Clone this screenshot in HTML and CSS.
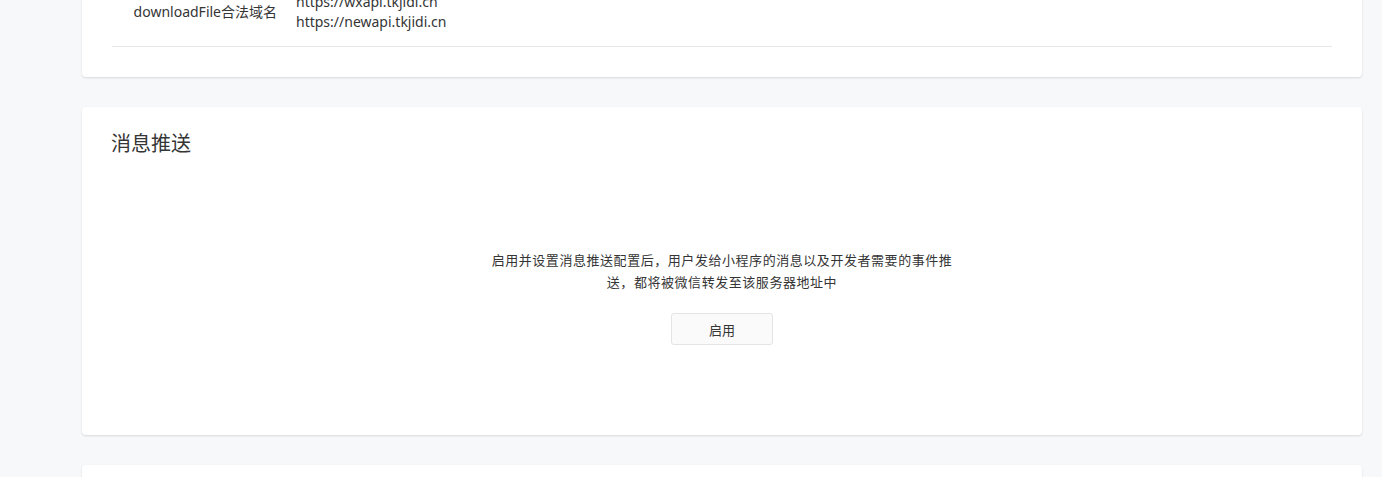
FILE: index.html
```html
<!DOCTYPE html>
<html lang="zh-CN">
<head>
    <meta charset="UTF-8">
    <meta name="viewport" content="width=device-width, initial-scale=1.0">
    <title>开发设置</title>
    <link rel="stylesheet" href="styles.css">
</head>
<body>
    <main class="page">

        <!-- 服务器域名 -->
        <section class="card domain-card">
            <div class="domain-row">
                <div class="domain-label">downloadFile合法域名</div>
                <div class="domain-values">
                    <p>https://wxapi.tkjidi.cn</p>
                    <p>https://newapi.tkjidi.cn</p>
                </div>
            </div>
        </section>

        <!-- 消息推送 -->
        <section class="card">
            <h3 class="card-title">消息推送</h3>
            <div class="empty-box">
                <p class="empty-desc">启用并设置消息推送配置后，用户发给小程序的消息以及开发者需要的事件推送，都将被微信转发至该服务器地址中</p>
                <button class="btn-default" type="button">启用</button>
            </div>
        </section>

        <section class="card card-next"></section>

    </main>
</body>
</html>
```

FILE: styles.css
```css
html, body {
    margin: 0;
    padding: 0;
}

body {
    font-family: "Noto Sans", "Noto Sans CJK SC", sans-serif;
    font-size: 14px;
    color: #353535;
    background-color: #f6f8f9;
    overflow: hidden;
}

p {
    margin: 0;
}

.page {
    margin-top: -8px;
    padding: 0 20px 0 82px;
    display: flex;
    flex-direction: column;
    gap: 30px;
}

.card {
    background-color: #fff;
    border-radius: 4px;
    box-shadow: 0 1px 2px rgba(150, 150, 150, 0.3);
    padding: 24px 30px;
}

/* 域名 */
.domain-card {
    padding: 0 30px 30px;
}

.domain-row {
    display: flex;
    align-items: center;
    padding-bottom: 14px;
    border-bottom: 1px solid #e7e7eb;
}

.domain-label {
    width: 165px;
    text-align: right;
    margin-right: 19px;
    line-height: 20px;
}

.domain-values p {
    line-height: 20px;
}

/* 消息推送 */
.card-title {
    margin: 0 0 0 -1px;
    font-size: 20px;
    font-weight: 400;
    line-height: 24px;
    transform: translateY(1px);
}

.empty-box {
    padding: 94px 0 66px;
    display: flex;
    flex-direction: column;
    align-items: center;
}

.empty-desc {
    max-width: 480px;
    font-family: "Noto Sans CJK SC", sans-serif;
    font-size: 13px;
    letter-spacing: 0.55px;
    text-spacing-trim: space-all;
    line-height: 22px;
    text-align: center;
}

.btn-default {
    margin-top: 20px;
    width: 102px;
    height: 32px;
    font-family: inherit;
    font-size: 13px;
    color: #353535;
    background-color: #fafafa;
    border: 1px solid #e4e4e4;
    border-radius: 3px;
    cursor: pointer;
}

.card-next {
    height: 80px;
}
```
